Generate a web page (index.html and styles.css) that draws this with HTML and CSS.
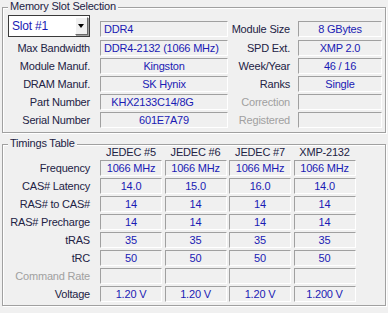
FILE: index.html
```html
<!DOCTYPE html>
<html>

<head>
    <link rel="stylesheet" href="styles.css">
</head>

<body>
    <div class="Group Slot">
        <span class="Legend">Memory Slot Selection</span>
        <div class="SlotGrid">
            <div class="Select"><span>Slot #1</span><span class="Drop"></span></div>
            <div class="Val Left">DDR4</div>
            <div class="Lbl">Module Size</div>
            <div class="Val">8 GBytes</div>

            <div class="Lbl">Max Bandwidth</div>
            <div class="Val Left">DDR4-2132 (1066 MHz)</div>
            <div class="Lbl">SPD Ext.</div>
            <div class="Val">XMP 2.0</div>

            <div class="Lbl">Module Manuf.</div>
            <div class="Val">Kingston</div>
            <div class="Lbl">Week/Year</div>
            <div class="Val">46 / 16</div>

            <div class="Lbl">DRAM Manuf.</div>
            <div class="Val">SK Hynix</div>
            <div class="Lbl">Ranks</div>
            <div class="Val">Single</div>

            <div class="Lbl">Part Number</div>
            <div class="Val Part">KHX2133C14/8G</div>
            <div class="Lbl Off">Correction</div>
            <div class="Val"></div>

            <div class="Lbl">Serial Number</div>
            <div class="Val">601E7A79</div>
            <div class="Lbl Off">Registered</div>
            <div class="Val"></div>
        </div>
    </div>

    <div class="Group Timings">
        <span class="Legend">Timings Table</span>
        <div class="TimeGrid">
            <div></div>
            <div class="Head">JEDEC #5</div>
            <div class="Head">JEDEC #6</div>
            <div class="Head">JEDEC #7</div>
            <div class="Head">XMP-2132</div>

            <div class="Lbl">Frequency</div>
            <div class="Val">1066 MHz</div>
            <div class="Val">1066 MHz</div>
            <div class="Val">1066 MHz</div>
            <div class="Val">1066 MHz</div>

            <div class="Lbl">CAS# Latency</div>
            <div class="Val">14.0</div>
            <div class="Val">15.0</div>
            <div class="Val">16.0</div>
            <div class="Val">14.0</div>

            <div class="Lbl">RAS# to CAS#</div>
            <div class="Val">14</div>
            <div class="Val">14</div>
            <div class="Val">14</div>
            <div class="Val">14</div>

            <div class="Lbl">RAS# Precharge</div>
            <div class="Val">14</div>
            <div class="Val">14</div>
            <div class="Val">14</div>
            <div class="Val">14</div>

            <div class="Lbl">tRAS</div>
            <div class="Val">35</div>
            <div class="Val">35</div>
            <div class="Val">35</div>
            <div class="Val">35</div>

            <div class="Lbl">tRC</div>
            <div class="Val">50</div>
            <div class="Val">50</div>
            <div class="Val">50</div>
            <div class="Val">50</div>

            <div class="Lbl Off">Command Rate</div>
            <div class="Val"></div>
            <div class="Val"></div>
            <div class="Val"></div>
            <div class="Val"></div>

            <div class="Lbl">Voltage</div>
            <div class="Val">1.20 V</div>
            <div class="Val">1.20 V</div>
            <div class="Val">1.20 V</div>
            <div class="Val">1.200 V</div>
        </div>
    </div>
</body>

</html>
```

FILE: styles.css
```css
body {
    margin: 0;
    width: 388px;
    height: 313px;
    background-color: #f0f0f0;
    font-family: "Liberation Sans", Arial, sans-serif;
    font-size: 11px;
    letter-spacing: -0.2px;
    color: #222244;
    overflow: hidden;
}

/* etched group box */
.Group {
    position: relative;
    margin: 7px 2px 0 2px;
    border: 1px solid #a0a0a0;
    box-shadow: inset 1px 1px 0 #fff, 1px 1px 0 #fff;
}

.Group.Timings {
    margin-top: 11px;
}

.Legend {
    position: absolute;
    top: -8px;
    left: 5px;
    padding: 0 2px;
    line-height: 13px;
    background-color: #f0f0f0;
}

.SlotGrid {
    display: grid;
    grid-template-columns: 92px 128px 70px 84px;
    grid-template-rows: 17px repeat(5, 16px);
    row-gap: 2px;
    padding: 13px 0 4px 5px;
}

.TimeGrid {
    display: grid;
    grid-template-columns: 94.5px repeat(4, 62px);
    grid-template-rows: 12px repeat(8, 16px);
    column-gap: 2.5px;
    row-gap: 2px;
    padding: 1px 0 3px 0;
}

.Lbl {
    height: 16px;
    line-height: 16px;
    text-align: right;
    padding-right: 10px;
    white-space: nowrap;
}

.SlotGrid .Lbl:nth-child(4n+3) {
    padding-right: 8px;
}

.TimeGrid .Lbl {
    padding-right: 7.5px;
}

.Lbl.Off {
    color: #a0a0a0;
}

.Head {
    line-height: 12px;
    text-align: center;
    white-space: nowrap;
}

.Val {
    box-sizing: border-box;
    height: 16px;
    line-height: 14px;
    border-top: 1px solid #a0a0a0;
    border-left: 1px solid #a0a0a0;
    border-right: 1px solid #fff;
    border-bottom: 1px solid #fff;
    color: #1a1ab4;
    text-align: center;
    white-space: nowrap;
    overflow: hidden;
}

.Val.Left {
    text-align: left;
    padding-left: 3px;
}

.Val.Part {
    padding-right: 23px;
}

.Select {
    box-sizing: border-box;
    display: flex;
    align-items: center;
    justify-content: space-between;
    width: 82px;
    height: 22px;
    margin-top: -6px;
    border: 1px solid #3a3a3a;
    background-color: #fff;
    color: #1a1ab4;
    font-size: 12px;
    padding: 1px 1px 1px 3px;
}

.Drop {
    position: relative;
    box-sizing: border-box;
    width: 13px;
    height: 18px;
    background-color: #f0f0f0;
    border-top: 1px solid #fff;
    border-left: 1px solid #fff;
    border-right: 1px solid #696969;
    border-bottom: 1px solid #696969;
    box-shadow: 1px 1px 0 #a0a0a0;
}

.Drop::after {
    content: "";
    position: absolute;
    left: 2px;
    top: 6px;
    border-left: 3.5px solid transparent;
    border-right: 3.5px solid transparent;
    border-top: 4px solid #000;
}
```
